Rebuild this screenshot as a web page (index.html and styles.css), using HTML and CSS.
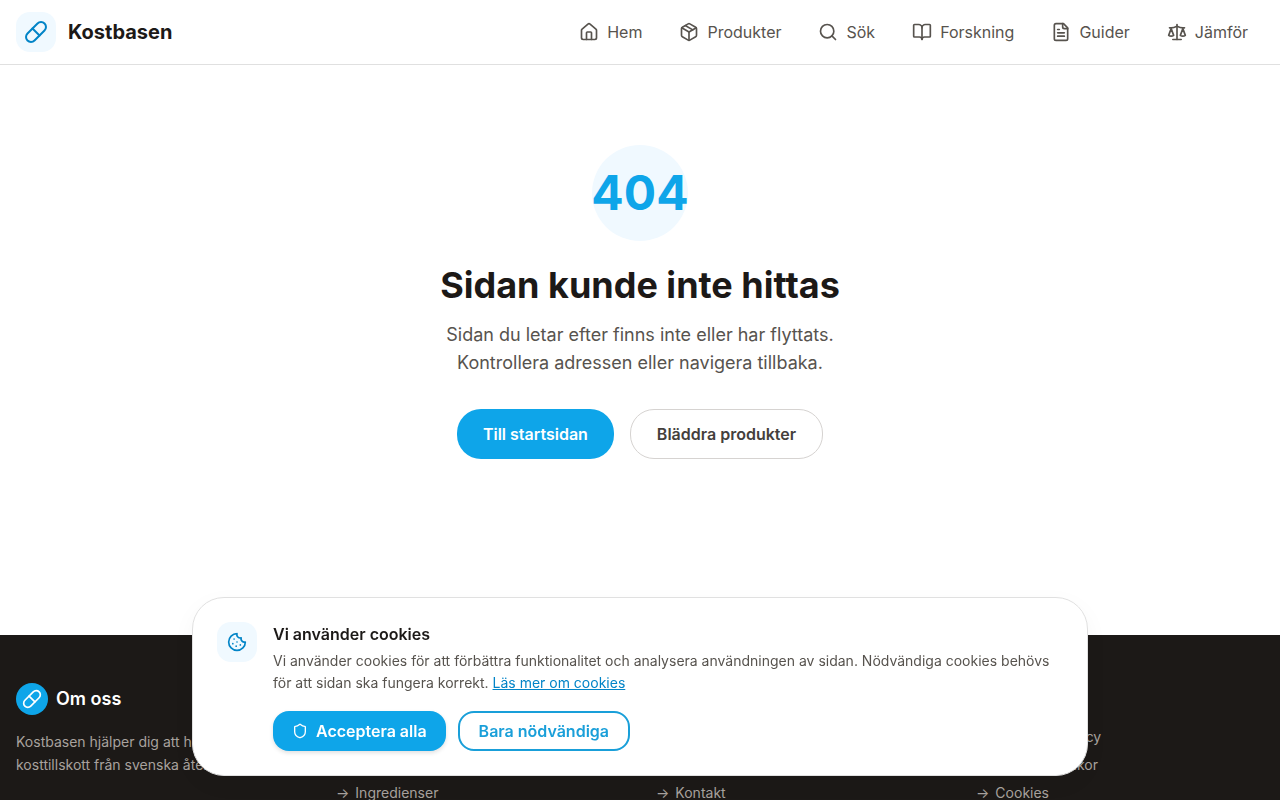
FILE: index.html
```html
<!DOCTYPE html>
<html lang="sv">
<head>
  <meta charset="UTF-8">
  <meta name="viewport" content="width=device-width, initial-scale=1.0">
  <title>Sidan kunde inte hittas | Kostbasen</title>
  <link rel="stylesheet" href="styles.css">
</head>
<body>
  <header class="header">
    <a href="#" class="brand">
      <span class="brand-icon">
        <svg class="icon icon-lg" viewBox="0 0 24 24"><path d="m10.5 20.5 10-10a4.95 4.95 0 1 0-7-7l-10 10a4.95 4.95 0 1 0 7 7Z"/><path d="m8.5 8.5 7 7"/></svg>
      </span>
      <span class="brand-name">Kostbasen</span>
    </a>

    <nav class="nav">
      <a href="#">
        <svg class="icon" viewBox="0 0 24 24"><path d="M15 21v-8a1 1 0 0 0-1-1h-4a1 1 0 0 0-1 1v8"/><path d="M3 10a2 2 0 0 1 .709-1.528l7-5.999a2 2 0 0 1 2.582 0l7 5.999A2 2 0 0 1 21 10v9a2 2 0 0 1-2 2H5a2 2 0 0 1-2-2z"/></svg>
        Hem
      </a>
      <a href="#">
        <svg class="icon" viewBox="0 0 24 24"><path d="M11 21.73a2 2 0 0 0 2 0l7-4A2 2 0 0 0 21 16V8a2 2 0 0 0-1-1.73l-7-4a2 2 0 0 0-2 0l-7 4A2 2 0 0 0 3 8v8a2 2 0 0 0 1 1.73z"/><path d="M12 22V12"/><path d="M3.29 7 12 12l8.71-5"/><path d="m7.5 4.27 9 5.15"/></svg>
        Produkter
      </a>
      <a href="#">
        <svg class="icon" viewBox="0 0 24 24"><circle cx="11" cy="11" r="8"/><path d="m21 21-4.3-4.3"/></svg>
        Sök
      </a>
      <a href="#">
        <svg class="icon" viewBox="0 0 24 24"><path d="M12 7v14"/><path d="M3 18a1 1 0 0 1-1-1V4a1 1 0 0 1 1-1h5a4 4 0 0 1 4 4 4 4 0 0 1 4-4h5a1 1 0 0 1 1 1v13a1 1 0 0 1-1 1h-6a3 3 0 0 0-3 3 3 3 0 0 0-3-3z"/></svg>
        Forskning
      </a>
      <a href="#">
        <svg class="icon" viewBox="0 0 24 24"><path d="M15 2H6a2 2 0 0 0-2 2v16a2 2 0 0 0 2 2h12a2 2 0 0 0 2-2V7Z"/><path d="M14 2v4a2 2 0 0 0 2 2h4"/><path d="M10 9H8"/><path d="M16 13H8"/><path d="M16 17H8"/></svg>
        Guider
      </a>
      <a href="#">
        <svg class="icon" viewBox="0 0 24 24"><path d="m16 16 3-8 3 8c-.87.65-1.92 1-3 1s-2.13-.35-3-1Z"/><path d="m2 16 3-8 3 8c-.87.65-1.92 1-3 1s-2.13-.35-3-1Z"/><path d="M7 21h10"/><path d="M12 3v18"/><path d="M3 7h2c2 0 5-1 7-2 2 1 5 2 7 2h2"/></svg>
        Jämför
      </a>
    </nav>
  </header>

  <main class="not-found">
    <div class="code">404</div>
    <h1>Sidan kunde inte hittas</h1>
    <p>Sidan du letar efter finns inte eller har flyttats. Kontrollera adressen eller navigera tillbaka.</p>
    <div class="actions">
      <a href="#" class="btn btn-primary">Till startsidan</a>
      <a href="#" class="btn btn-outline">Bläddra produkter</a>
    </div>
  </main>

  <footer class="footer">
    <div class="footer-grid">
      <div>
        <div class="about-title">
          <span class="about-icon">
            <svg class="icon" viewBox="0 0 24 24"><path d="m10.5 20.5 10-10a4.95 4.95 0 1 0-7-7l-10 10a4.95 4.95 0 1 0 7 7Z"/><path d="m8.5 8.5 7 7"/></svg>
          </span>
          <h2>Om oss</h2>
        </div>
        <p class="about-text">Kostbasen hjälper dig att hitta rätt kosttillskott från svenska återförsäljare.</p>
      </div>
      <div>
        <h2>Utforska</h2>
        <ul>
          <li><a href="#"><span>→</span>Produkter</a></li>
          <li><a href="#"><span>→</span>Forskning</a></li>
          <li><a href="#"><span>→</span>Ingredienser</a></li>
        </ul>
      </div>
      <div>
        <h2>Information</h2>
        <ul>
          <li><a href="#"><span>→</span>Om oss</a></li>
          <li><a href="#"><span>→</span>Guider</a></li>
          <li><a href="#"><span>→</span>Kontakt</a></li>
        </ul>
      </div>
      <div>
        <h2>Juridiskt</h2>
        <ul>
          <li><a href="#"><span>→</span>Integritetspolicy</a></li>
          <li><a href="#"><span>→</span>Användarvillkor</a></li>
          <li><a href="#"><span>→</span>Cookies</a></li>
        </ul>
      </div>
    </div>
  </footer>

  <div class="cookie-wrap">
    <section class="cookie" aria-labelledby="cookie-title">
      <div class="cookie-icon">
        <svg class="icon" viewBox="0 0 24 24"><path d="M12 2a10 10 0 1 0 10 10 4 4 0 0 1-5-5 4 4 0 0 1-5-5"/><path d="M8.5 8.5v.01"/><path d="M16 15.5v.01"/><path d="M12 12v.01"/><path d="M11 17v.01"/><path d="M7 14v.01"/></svg>
      </div>
      <div>
        <h2 id="cookie-title">Vi använder cookies</h2>
        <p>Vi använder cookies för att förbättra funktionalitet och analysera användningen av sidan. Nödvändiga cookies behövs för att sidan ska fungera korrekt. <a href="#">Läs mer om cookies</a></p>
        <div class="cookie-buttons">
          <button type="button" class="accept">
            <svg class="icon icon-sm" viewBox="0 0 24 24"><path d="M20 13c0 5-3.5 7.5-7.66 8.95a1 1 0 0 1-.67-.01C7.5 20.5 4 18 4 13V6a1 1 0 0 1 1-1c2 0 4.5-1.2 6.24-2.72a1.17 1.17 0 0 1 1.52 0C14.51 3.81 17 5 19 5a1 1 0 0 1 1 1z"/></svg>
            Acceptera alla
          </button>
          <button type="button" class="necessary">Bara nödvändiga</button>
        </div>
      </div>
    </section>
  </div>
</body>
</html>
```
FILE: styles.css
```css
* {
  box-sizing: border-box;
}

body {
  margin: 0;
  font-family: Inter, sans-serif;
  font-size: 16px;
  line-height: 24px;
  color: #1c1917;
  background-color: #fff;
}

h1, h2, p, ul {
  margin: 0;
  padding: 0;
}

a {
  color: inherit;
  text-decoration: none;
}

.icon {
  width: 20px;
  height: 20px;
  flex-shrink: 0;
  fill: none;
  stroke: currentColor;
  stroke-width: 2;
  stroke-linecap: round;
  stroke-linejoin: round;
}

.icon-lg {
  width: 24px;
  height: 24px;
}

.icon-sm {
  width: 16px;
  height: 16px;
}

/* Header */
.header {
  display: flex;
  align-items: center;
  justify-content: space-between;
  padding: 12px 16px;
  border-bottom: 1px solid #e0e0e0;
}

.brand {
  display: flex;
  align-items: center;
  gap: 12px;
}

.brand-icon, .cookie-icon {
  display: flex;
  align-items: center;
  justify-content: center;
  flex-shrink: 0;
  width: 40px;
  height: 40px;
  border-radius: 14px;
  background-color: #f0f9ff;
  color: #0284c7;
}

.brand-name {
  font-size: 20px;
  font-weight: 700;
}

.nav {
  display: flex;
  gap: 5px;
}

.nav a {
  display: flex;
  align-items: center;
  gap: 8px;
  padding: 8px 16px;
  color: #57534e;
}

/* 404 content */
.not-found {
  padding: 80px 16px;
  text-align: center;
}

.code {
  display: flex;
  align-items: center;
  justify-content: center;
  width: 96px;
  height: 96px;
  margin: 0 auto 24px;
  border-radius: 50%;
  background-color: #f0f9ff;
  color: #0ea5e9;
  font-size: 48px;
  font-weight: 700;
}

.not-found h1 {
  margin-bottom: 16px;
  font-size: 36px;
  line-height: 40px;
  font-weight: 700;
}

.not-found p {
  max-width: 448px;
  margin: 0 auto 32px;
  font-size: 18px;
  line-height: 28px;
  color: #57534e;
}

.actions {
  display: flex;
  justify-content: center;
  gap: 16px;
}

.btn {
  display: flex;
  align-items: center;
  padding: 12px 26px;
  border-radius: 24px;
  font-weight: 600;
}

.btn-primary {
  background-color: #0ea5e9;
  color: #fff;
}

.btn-outline {
  border: 1px solid #d6d3d1;
  color: #44403c;
}

/* Footer */
.footer {
  margin-top: 96px;
  padding: 48px 16px;
  background-color: #1c1917;
  color: #a8a29e;
  font-size: 14px;
}

.footer-grid {
  display: grid;
  grid-template-columns: repeat(4, 1fr);
  gap: 32px;
}

.footer h2 {
  font-size: 18px;
  line-height: 28px;
  font-weight: 600;
  color: #fff;
}

.about-title {
  display: flex;
  align-items: center;
  gap: 8px;
  margin-bottom: 15px;
}

.about-icon {
  display: flex;
  align-items: center;
  justify-content: center;
  width: 32px;
  height: 32px;
  border-radius: 50%;
  background-color: #0ea5e9;
  color: #fff;
}

.about-text {
  line-height: 23px;
}

.footer ul {
  display: grid;
  gap: 8px;
  margin-top: 16px;
  list-style: none;
}

.footer li a {
  display: flex;
  gap: 6px;
  line-height: 20px;
}

/* Cookie banner */
.cookie-wrap {
  position: fixed;
  left: 0;
  right: 0;
  bottom: 0;
  padding: 24px;
}

.cookie {
  display: flex;
  gap: 16px;
  max-width: 896px;
  margin: 0 auto;
  padding: 24px;
  border: 1px solid #e0e0e0;
  border-radius: 32px;
  background-color: #fff;
  box-shadow: 0 8px 24px rgba(0, 0, 0, 0.04);
}

.cookie h2 {
  margin-bottom: 4px;
  font-size: 16px;
  font-weight: 600;
}

.cookie p {
  margin-bottom: 17px;
  font-size: 14px;
  line-height: 22px;
  color: #57534e;
}

.cookie p a {
  color: #0284c7;
  text-decoration: underline;
}

.cookie-buttons {
  display: flex;
  gap: 12px;
}

.cookie button {
  display: flex;
  align-items: center;
  gap: 8px;
  height: 40px;
  padding: 0 19px;
  border: 0;
  border-radius: 16px;
  font-family: inherit;
  font-size: 16px;
  font-weight: 600;
  cursor: pointer;
}

.cookie .accept {
  background-color: #0ea5e9;
  color: #fff;
  box-shadow: 0 2px 4px rgba(0, 0, 0, 0.12);
}

.cookie .necessary {
  border: 2px solid #199fd9;
  background-color: #fff;
  color: #199fd9;
}
```
